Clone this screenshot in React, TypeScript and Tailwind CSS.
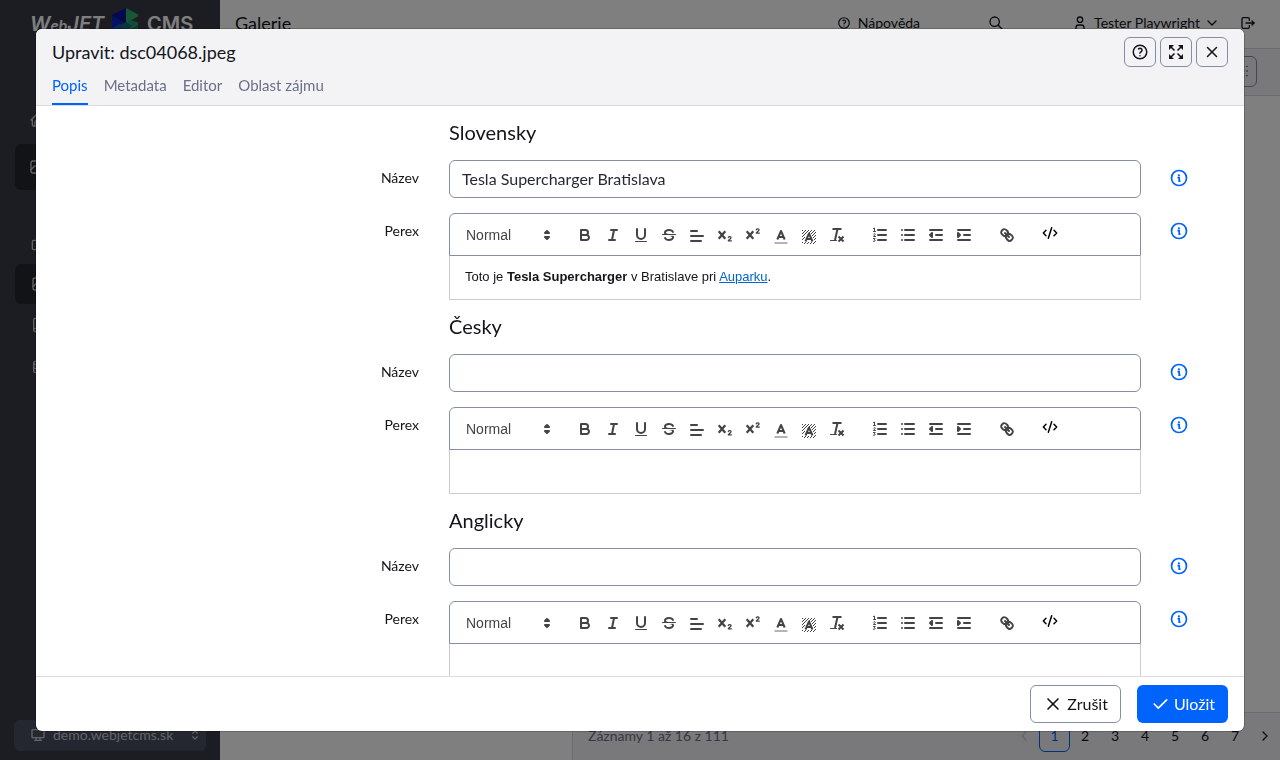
import React, { useId, useState } from "react";
import {
  TbCheck,
  TbChevronDown,
  TbChevronLeft,
  TbChevronRight,
  TbDatabase,
  TbDeviceDesktop,
  TbHelp,
  TbHome,
  TbLogout,
  TbPhoto,
  TbSearch,
  TbSelector,
  TbUser,
  TbX,
} from "react-icons/tb";
import { CodeXml, Copy, Book, List } from "lucide-react";

type IconProps = { children: React.ReactNode };

function EditorIcon({ children }: IconProps) {
  return (
    <svg
      viewBox="0 0 18 18"
      className="h-[18px] w-[18px]"
      fill="none"
      stroke="#444"
      strokeWidth="2"
      strokeLinecap="round"
      strokeLinejoin="round"
      aria-hidden="true"
    >
      {children}
    </svg>
  );
}

const hatch: string[] = [];
for (let y = 4; y < 18; y += 1) {
  for (let x = 2; x < 16; x += 1) {
    const inLetter = y > 6 && y < 16 && Math.abs(x - 8.5) < 2 + (y - 6) * 0.4;
    if ((x + y) % 3 === 0 && !inLetter) hatch.push(`M${x} ${y}h1v1h-1z`);
  }
}

const textTools = [
  {
    name: "Tučné",
    icon: (
      <EditorIcon>
        <path d="M5,4H9.5A2.5,2.5,0,0,1,12,6.5v0A2.5,2.5,0,0,1,9.5,9H5A0,0,0,0,1,5,9V4A0,0,0,0,1,5,4Z" />
        <path d="M5,9h5.5A2.5,2.5,0,0,1,13,11.5v0A2.5,2.5,0,0,1,10.5,14H5a0,0,0,0,1,0,0V9A0,0,0,0,1,5,9Z" />
      </EditorIcon>
    ),
  },
  {
    name: "Kurzíva",
    icon: (
      <EditorIcon>
        <path d="M7 4h6M5 14h6M8 14l2-10" />
      </EditorIcon>
    ),
  },
  {
    name: "Podtržené",
    icon: (
      <EditorIcon>
        <path d="M5,3V9a4.012,4.012,0,0,0,4,4H9a4.012,4.012,0,0,0,4-4V3" />
        <rect x="3" y="15" width="12" height="1" rx="0.5" fill="#444" stroke="none" />
      </EditorIcon>
    ),
  },
  {
    name: "Přeškrtnuté",
    icon: (
      <EditorIcon>
        <path strokeWidth="1" d="M15.5 8.5h-13" />
        <path
          fill="#444"
          stroke="none"
          d="M9.007,8C6.542,7.791,6,7.519,6,6.5,6,5.792,7.283,5,9,5c1.571,0,2.765.679,2.969,1.309a1,1,0,0,0,1.9-.617C13.356,4.106,11.354,3,9,3,6.2,3,4,4.538,4,6.5a3.2,3.2,0,0,0,.5,1.843Z"
        />
        <path
          fill="#444"
          stroke="none"
          d="M8.984,10C11.457,10.208,12,10.479,12,11.5c0,0.708-1.283,1.5-3,1.5-1.571,0-2.765-.679-2.969-1.309a1,1,0,1,0-1.9.617C4.644,13.894,6.646,15,9,15c2.8,0,5-1.538,5-3.5a3.2,3.2,0,0,0-.5-1.843Z"
        />
      </EditorIcon>
    ),
  },
  {
    name: "Zarovnání",
    icon: (
      <EditorIcon>
        <path d="M3 10h12M3 15h10M3 5h6" />
      </EditorIcon>
    ),
  },
  {
    name: "Dolní index",
    icon: (
      <EditorIcon>
        <path strokeLinecap="butt" strokeWidth="2.300" d="M2.700 5.300l6.600 7.400M9.300 5.300l-6.600 7.400" />
        <path strokeWidth="1.300" d="M12.300 11.500c.5-1.400 3-1.200 2.700.3c-.2 1-2.200 1.700-2.700 3h3.100" />
      </EditorIcon>
    ),
  },
  {
    name: "Horní index",
    icon: (
      <EditorIcon>
        <path strokeLinecap="butt" strokeWidth="2.300" d="M2.700 5.300l6.600 7.400M9.300 5.300l-6.600 7.400" />
        <path strokeWidth="1.300" d="M12.300 3.800c.5-1.400 3-1.200 2.700.3c-.2 1-2.200 1.700-2.700 3h3.100" />
      </EditorIcon>
    ),
  },
  {
    name: "Barva textu",
    icon: (
      <EditorIcon>
        <path strokeOpacity="0.4" strokeLinecap="butt" d="M2.500 17h13" />
        <path strokeLinecap="butt" d="M5.300 13.500L9 5l3.700 8.500M11.600 11H6.400" />
      </EditorIcon>
    ),
  },
  {
    name: "Barva pozadí",
    icon: (
      <EditorIcon>
        <path d={hatch.join("")} fill="#444" stroke="none" />
        <path strokeLinecap="butt" d="M5.500 15.500L9 7.500l3.500 8M11.600 13H6.400" />
      </EditorIcon>
    ),
  },
  {
    name: "Vymazat formát",
    icon: (
      <EditorIcon>
        <path strokeLinecap="butt" d="M4.500 3h9M7 14L9.500 3M10.500 10.500l5 5M15.500 10.500l-5 5" />
        <path strokeWidth="1" d="M2.500 14.500h6" />
      </EditorIcon>
    ),
  },
];

const listTools = [
  {
    name: "Číslovaný seznam",
    icon: (
      <EditorIcon>
        <path d="M7 4h8M7 9h8M7 14h8" />
        <path strokeWidth="1" d="M2.500 2.500l1-.5v3.500M2.500 5.500h2M2.500 8c.5-.8 2-.5 1.700.400l-1.700 2.100h2M2.500 12.500h1.700l-1 1.300c1.700.2 1.300 1.900-.9 1.500" />
      </EditorIcon>
    ),
  },
  {
    name: "Seznam s odrážkami",
    icon: (
      <EditorIcon>
        <path d="M6 4h9M6 9h9M6 14h9M3 4h0M3 9h0M3 14h0" />
      </EditorIcon>
    ),
  },
  {
    name: "Zmenšit odsazení",
    icon: (
      <EditorIcon>
        <path d="M3 14h12M3 4h12M9 9h6M5 7v4L3 9z" />
      </EditorIcon>
    ),
  },
  {
    name: "Zvětšit odsazení",
    icon: (
      <EditorIcon>
        <path d="M3 14h12M3 4h12M9 9h6M3 7v4l2-2z" />
      </EditorIcon>
    ),
  },
];

const linkTools = [
  {
    name: "Odkaz",
    icon: (
      <EditorIcon>
        <path d="M7 7l4 4" />
        <path d="M8.900 4.577a3.476 3.476 0 0 1 .360 4.679A3.476 3.476 0 0 1 4.577 8.900C3.185 7.500 2.035 6.400 4.217 4.217S7.500 3.185 8.900 4.577Z" />
        <path d="M13.423 9.100a3.476 3.476 0 0 0-4.679-.360 3.476 3.476 0 0 0 .360 4.679c1.392 1.392 2.500 2.542 4.679.360S14.815 10.500 13.423 9.100Z" />
      </EditorIcon>
    ),
  },
];

type Tool = { name: string; icon: React.ReactNode };

function ToolGroup({ tools }: { tools: Tool[] }) {
  return (
    <div className="flex">
      {tools.map((tool) => (
        <button
          key={tool.name}
          type="button"
          aria-label={tool.name}
          className="flex h-6 w-7 items-center justify-center"
        >
          {tool.icon}
        </button>
      ))}
    </div>
  );
}

function InfoButton() {
  return (
    <button type="button" aria-label="Informace" className="block h-[18px] w-[18px]">
      <svg viewBox="0 0 18 18" className="h-[18px] w-[18px]" fill="none" stroke="#0063fb" aria-hidden="true">
        <circle cx="9" cy="9" r="7.500" strokeWidth="1.700" />
        <circle cx="8.900" cy="6.300" r="1.100" fill="#0063fb" stroke="none" />
        <path d="M7.500 8.700H9.200v3.500h1.300" strokeWidth="1.700" />
      </svg>
    </button>
  );
}

function ExpandIcon() {
  return (
    <svg viewBox="0 0 16 16" className="h-4 w-4" fill="none" stroke="currentColor" aria-hidden="true">
      <path d="M2.500 2.500l4 4M13.500 2.500l-4 4M2.500 13.500l4-4M13.500 13.500l-4-4" strokeWidth="1.600" />
      <path
        d="M1 1h5L1 6zM15 1v5l-5-5zM1 15v-5l5 5zM15 15h-5l5-5z"
        fill="currentColor"
        stroke="none"
      />
    </svg>
  );
}

const rowGrid = "grid grid-cols-[398fr_722fr_88fr]";

function LanguageSection({
  title,
  name,
  perex,
}: {
  title: string;
  name: string;
  perex?: React.ReactNode;
}) {
  const id = useId();
  const [value, setValue] = useState(name);
  return (
    <section>
      <div className={rowGrid}>
        <h2 className="col-start-2 flex h-[54px] items-center px-[15px] pb-0.5 text-xl">{title}</h2>
      </div>
      <div className={rowGrid}>
        <label htmlFor={id + "name"} className="pt-2 pr-[15px] text-right text-sm">
          Název
        </label>
        <div className="px-[15px]">
          <input
            id={id + "name"}
            value={value}
            onChange={(e) => setValue(e.target.value)}
            className="block h-[38px] w-full rounded-md border border-[#868ea5] bg-white px-3 pb-0.5 text-base text-[#272a35] outline-none"
          />
        </div>
        <div className="pt-[9px] pl-[14px]">
          <InfoButton />
        </div>
      </div>
      <div className={rowGrid + " mt-[15px]"}>
        <div id={id + "perex"} className="pt-2 pr-[15px] text-right text-sm">
          Perex
        </div>
        <div className="px-[15px]">
          <div className="flex h-[43px] items-center gap-[15px] rounded-t-md border border-[#868ea5] px-2">
            <button
              type="button"
              className="flex h-6 w-[98px] items-center justify-between pl-2 text-left font-['Liberation_Sans',sans-serif] text-sm font-medium text-[#444]"
            >
              Normal
              <svg viewBox="0 0 18 18" className="h-[18px] w-[18px]" stroke="#444" fill="#444" strokeWidth="2" strokeLinejoin="round" aria-hidden="true">
                <path d="M7 11l2 2 2-2zM7 7l2-2 2 2z" />
              </svg>
            </button>
            <ToolGroup tools={textTools} />
            <ToolGroup tools={listTools} />
            <ToolGroup tools={linkTools} />
            <button type="button" aria-label="Zdrojový kód" className="flex h-6 w-7 items-start justify-center pt-0.5">
              <CodeXml className="h-4 w-4 text-black" strokeWidth={2.2} />
            </button>
          </div>
          <div
            role="textbox"
            aria-labelledby={id + "perex"}
            contentEditable
            suppressContentEditableWarning
            className="min-h-[44px] border border-t-0 border-[#ccc] px-[15px] py-[11px] font-['Liberation_Sans',sans-serif] text-[13px] leading-[19px] outline-none"
          >
            {perex}
          </div>
        </div>
        <div className="pt-[9px] pl-[14px]">
          <InfoButton />
        </div>
      </div>
    </section>
  );
}

function Logo() {
  return (
    <div className="flex h-12 items-center pl-[30px] font-['Inter',sans-serif] text-xl font-semibold text-white">
      <span className="w-[81px] italic">
        W<span className="text-sm">eb</span>JET
      </span>
      <svg viewBox="0 0 28 32" className="h-8 w-7" aria-hidden="true">
        <path d="M1 7L15 0v14L1 21z" fill="#0712a0" />
        <path d="M15 0l12 6.500v2L15 15z" fill="#2fae6d" />
        <path d="M1 8l14 7-14 7z" fill="#0d22c8" />
        <path d="M8 11l7-4v8z" fill="#06107c" />
        <path d="M15 15l5-3 7 2.500v3L15 24z" fill="#269a70" />
        <path d="M1 21l7-5 7 6-14 6z" fill="#1256b4" />
        <path d="M8 17l7-3 6 4-6 5z" fill="#116c78" />
        <path d="M1 23l14 7v2L1 28z" fill="#0a25ad" />
        <path d="M15 24l12-6v6l-12 8z" fill="#1c7d63" />
      </svg>
      <span className="pl-2">CMS</span>
    </div>
  );
}

function Sidebar() {
  return (
    <aside className="flex w-[220px] shrink-0 flex-col bg-[#383b44] text-[#c4c6cf]">
      <Logo />
      <nav aria-label="Hlavní menu" className="mt-12 flex flex-col px-[15px]">
        <a href="#home" aria-label="Úvod" className="flex h-12 items-center pl-[14px]">
          <TbHome className="h-4 w-4" />
        </a>
        <a href="#gallery" aria-label="Galerie" className="flex h-[46px] items-center rounded-md bg-[#24262c] pl-[14px]">
          <TbPhoto className="h-4 w-4" />
        </a>
        <a href="#pages" aria-label="Soubory" className="mt-8 flex h-[42px] items-center pl-4">
          <Copy className="h-4 w-4 -scale-x-100" />
        </a>
        <a href="#images" aria-label="Obrázky" className="flex h-10 items-center rounded-md bg-[#24262c] pl-4">
          <TbPhoto className="h-4 w-4" />
        </a>
        <a href="#docs" aria-label="Dokumenty" className="flex h-[42px] items-center pl-4">
          <Book className="h-4 w-4" />
        </a>
        <a href="#data" aria-label="Data" className="flex h-[42px] items-center pl-4">
          <TbDatabase className="h-4 w-4" />
        </a>
      </nav>
      <button
        type="button"
        className="mx-[14px] mt-auto mb-[9px] flex h-[31px] items-center rounded-md bg-[#4b4f60] pr-1 pb-0.5 pl-4 text-sm text-[#c4c6cf]"
      >
        <TbDeviceDesktop className="mr-[7px] h-4 w-4" />
        demo.webjetcms.sk
        <TbSelector className="ml-auto h-[14px] w-[14px]" />
      </button>
    </aside>
  );
}

function Backdrop() {
  return (
    <div className="flex min-h-screen bg-white" aria-hidden="true">
      <Sidebar />
      <div className="flex min-w-0 flex-1 flex-col">
        <header className="flex h-12 items-center pr-6 pb-0.5 pl-[15px] text-sm">
          <h1 className="mr-auto text-lg">Galerie</h1>
          <a href="#help" className="flex items-center gap-[7px]">
            <TbHelp className="h-[14px] w-[14px]" />
            Nápověda
          </a>
          <TbSearch className="mr-[68px] ml-[68px] h-4 w-4" />
          <button type="button" className="flex items-center">
            <TbUser className="mr-[6px] h-4 w-4" />
            Tester Playwright
            <TbChevronDown className="ml-1 h-4 w-4" />
          </button>
          <TbLogout className="ml-5 h-4 w-4" />
        </header>
        <div className="flex h-12 items-center justify-end border-y border-[#d5d8e2] bg-[#f3f3f6] pb-0.5 pr-[23px]">
          <button type="button" className="flex h-[31px] w-8 items-center justify-center rounded-md border border-[#868ea5]">
            <List className="h-4 w-4 -scale-x-100" />
          </button>
        </div>
        <div className="flex flex-1">
          <div className="w-[352px]" />
          <div className="flex flex-1 flex-col justify-end border-l border-[#d5d8e2]">
            <footer className="flex h-12 items-center border-t border-[#d5d8e2] bg-[#f3f3f6] pb-0.5 pl-[15px] text-sm">
              <span className="mr-auto text-[#6c7086]">Záznamy 1 až 16 z 111</span>
              <span className="flex w-[30px] justify-center text-[#c4c6cf]">
                <TbChevronLeft className="h-4 w-4" />
              </span>
              <a href="#p1" className="flex h-8 w-[31px] items-center justify-center rounded-md border border-[#0063fb] text-[#0063fb]">
                1
              </a>
              {[2, 3, 4, 5, 6, 7].map((n) => (
                <a key={n} href={"#p" + n} className="w-[30px] text-center">
                  {n}
                </a>
              ))}
              <span className="flex w-[30px] justify-center">
                <TbChevronRight className="h-4 w-4" />
              </span>
            </footer>
          </div>
        </div>
      </div>
    </div>
  );
}

const tabs = ["Popis", "Metadata", "Editor", "Oblast zájmu"];
const headerButton =
  "flex h-[30px] w-8 items-center justify-center rounded-md border border-[#868ea5] bg-[#f3f3f6]";

export default function App() {
  const [active, setActive] = useState("Popis");
  return (
    <div className="font-['Lato','Open_Sans',sans-serif] text-[#13151b]">
      <Backdrop />
      <div className="fixed inset-0 flex bg-black/50 px-9 py-[29px]">
        <div
          role="dialog"
          aria-modal="true"
          aria-labelledby="dialog-title"
          className="flex min-w-0 flex-1 flex-col overflow-hidden rounded-md bg-white shadow-[0_0_0_1px_rgba(0,0,0,0.2)]"
        >
          <header className="border-b border-[#dadce5] bg-[#f3f3f6] px-4">
            <div className="flex h-[46px] items-center gap-1">
              <h1 id="dialog-title" className="mr-auto text-lg">
                Upravit: dsc04068.jpeg
              </h1>
              <button type="button" aria-label="Nápověda" className={headerButton}>
                <TbHelp className="h-[18px] w-[18px]" />
              </button>
              <button type="button" aria-label="Maximalizovat" className={headerButton}>
                <ExpandIcon />
              </button>
              <button type="button" aria-label="Zavřít" className={headerButton}>
                <TbX className="h-[18px] w-[18px]" />
              </button>
            </div>
            <div role="tablist" className="flex h-[30px] gap-4 text-[15px] leading-5 text-[#6c7086]">
              {tabs.map((tab) => (
                <button
                  key={tab}
                  type="button"
                  role="tab"
                  aria-selected={active === tab}
                  onClick={() => setActive(tab)}
                  className={
                    active === tab
                      ? "border-b-2 border-[#0063fb] pb-[10px] text-[#0063fb]"
                      : "border-b-2 border-transparent pb-[10px]"
                  }
                >
                  {tab}
                </button>
              ))}
            </div>
          </header>
          <main className="min-h-0 flex-1 overflow-y-auto [scrollbar-width:none]">
            <LanguageSection
              title="Slovensky"
              name="Tesla Supercharger Bratislava"
              perex={
                <p>
                  Toto je <strong>Tesla Supercharger</strong> v Bratislave pri{" "}
                  <a href="#auparku" className="text-[#06c] underline">
                    Auparku
                  </a>
                  .
                </p>
              }
            />
            <LanguageSection title="Česky" name="" />
            <LanguageSection title="Anglicky" name="" />
          </main>
          <footer className="flex justify-end gap-4 border-t border-[#dadce5] px-4 py-2">
            <button type="button" className="flex h-[38px] items-center gap-1 rounded-md border border-[#868ea5] px-3 text-base">
              <TbX className="h-5 w-5" />
              Zrušit
            </button>
            <button type="button" className="flex h-[38px] items-center gap-1 rounded-md bg-[#0063fb] px-[13px] text-base text-white">
              <TbCheck className="h-5 w-5" />
              Uložit
            </button>
          </footer>
        </div>
      </div>
    </div>
  );
}
